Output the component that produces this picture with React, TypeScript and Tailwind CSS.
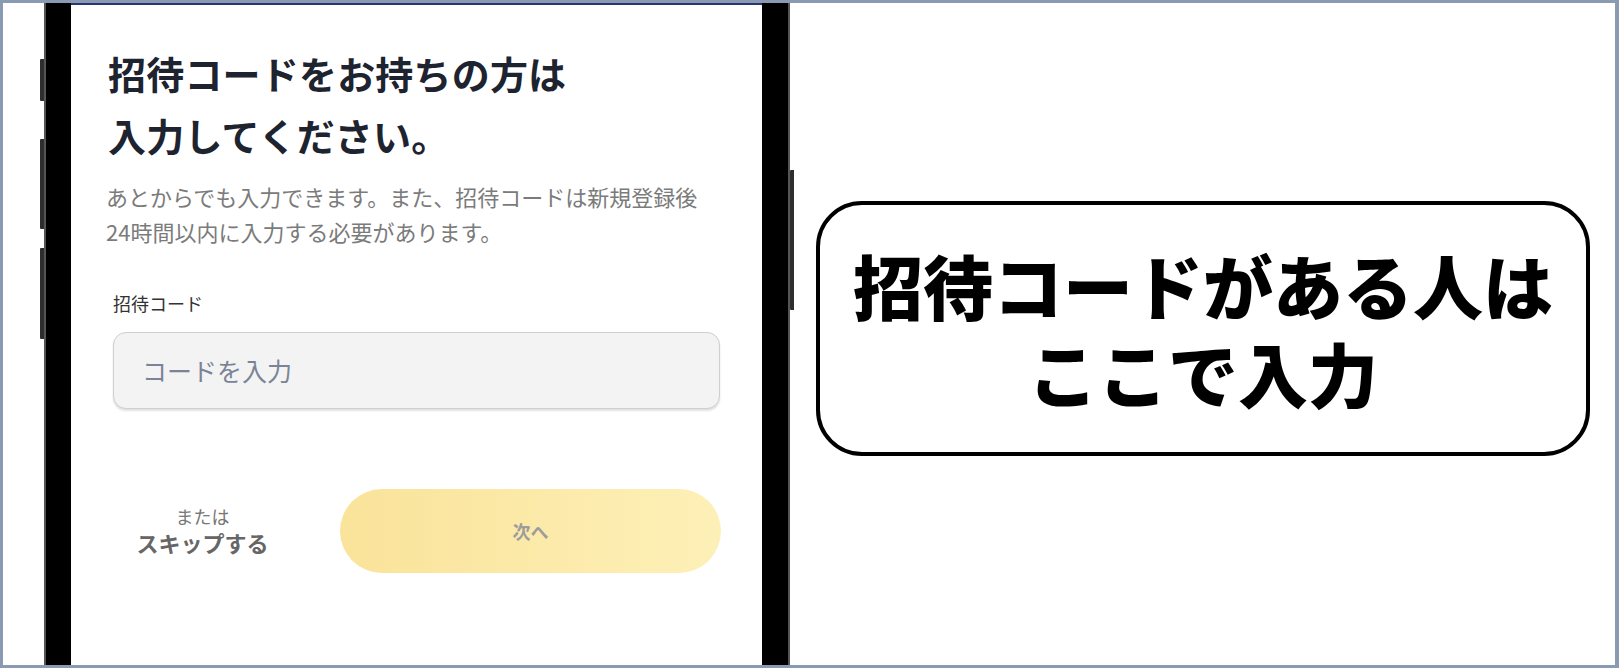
const JP = { fontFamily: '"Noto Sans CJK JP", "Noto Sans", sans-serif' }

function SideButtons({ items }: { items: { top: string; height: string }[] }) {
  return (
    <div className="flex flex-col w-[4px]">
      {items.map((b, i) => (
        <div key={i} className={`${b.top} ${b.height} w-[4px] bg-[#2e2e2e] rounded-l-[1px]`} />
      ))}
    </div>
  )
}

function PhoneScreen() {
  return (
    <div className="w-[691px] h-full bg-white flex flex-col border-t-2 border-[#2b3478] pl-[37px] pr-[41px]">
      <h1 className="mt-[37px] text-[38px] leading-[62px] font-bold text-[#1e2330] tracking-[0.005em]">
        招待コードをお持ちの方は
        <br />
        入力してください。
      </h1>
      <p className="mt-[13px] text-[22px] leading-[35px] text-[#7b7b7b] -ml-[2px]">
        あとからでも入力できます。また、招待コードは新規登録後
        <br />
        24時間以内に入力する必要があります。
      </p>
      <label className="mt-[41px] ml-[5px] text-[18px] leading-[26px] text-[#333]">招待コード</label>
      <div className="mt-[16px] ml-[5px] w-[607px] h-[77px] rounded-[13px] bg-[#f3f3f3] border border-[#cfcfcf] shadow-[0_2px_2px_rgba(0,0,0,0.12)] flex items-center pl-[28px]">
        <span className="text-[25px] text-[#7a8496]">コードを入力</span>
      </div>
      <div className="mt-[80px] ml-[5px] flex items-center">
        <div className="w-[179px] flex flex-col items-center">
          <span className="text-[18px] leading-[22px] text-[#777]">または</span>
          <span className="text-[22px] leading-[30px] font-bold text-[#666]">スキップする</span>
        </div>
        <div className="ml-[48px] w-[381px] h-[84px] rounded-full bg-gradient-to-r from-[#fae39a] to-[#fdf0b7] flex items-center justify-center">
          <span className="text-[18px] font-bold text-[#9c9c9c]">次へ</span>
        </div>
      </div>
    </div>
  )
}

export default function App() {
  return (
    <div
      style={JP}
      className="w-[1619px] h-[668px] bg-white border-t-[3px] border-l-[3px] border-r-[4px] border-b-[3px] border-[#8a9bb1] flex overflow-hidden"
    >
      <div className="w-[37px]" />
      <SideButtons
        items={[
          { top: "mt-[56px]", height: "h-[42px]" },
          { top: "mt-[38px]", height: "h-[90px]" },
          { top: "mt-[19px]", height: "h-[91px]" },
        ]}
      />
      <div className="w-[2px] bg-[#555]" />
      <div className="w-[25px] bg-black" />
      <PhoneScreen />
      <div className="w-[26px] bg-black" />
      <div className="w-[2px] bg-[#555]" />
      <SideButtons items={[{ top: "mt-[167px]", height: "h-[140px]" }]} />
      <div className="w-[22px]" />
      <div className="mt-[198px] w-[774px] h-[255px] rounded-[46px] border-[4px] border-black flex items-center justify-center">
        <p className="text-center text-[70px] leading-[88px] font-black text-black">
          招待コードがある人は
          <br />
          ここで入力
        </p>
      </div>
    </div>
  )
}
